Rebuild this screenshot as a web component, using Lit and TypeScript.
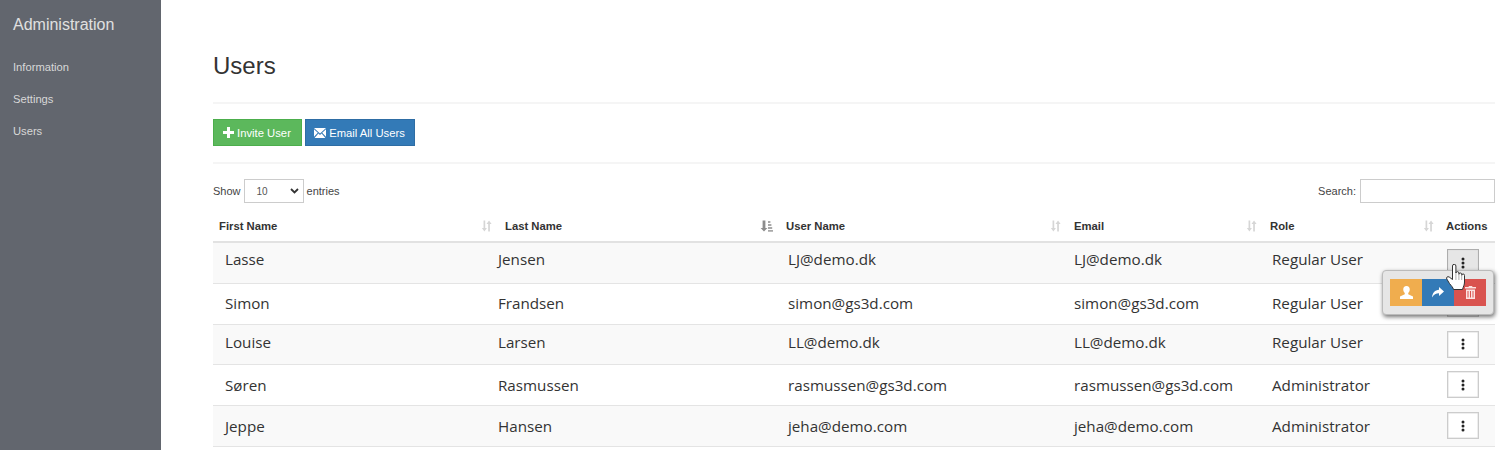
import { LitElement, html, css } from "lit";
import { customElement } from "lit/decorators.js";

const users = [
  ["Lasse", "Jensen", "LJ@demo.dk", "LJ@demo.dk", "Regular User"],
  ["Simon", "Frandsen", "simon@gs3d.com", "simon@gs3d.com", "Regular User"],
  ["Louise", "Larsen", "LL@demo.dk", "LL@demo.dk", "Regular User"],
  ["Søren", "Rasmussen", "rasmussen@gs3d.com", "rasmussen@gs3d.com", "Administrator"],
  ["Jeppe", "Hansen", "jeha@demo.com", "jeha@demo.com", "Administrator"],
];

const headers = ["First Name", "Last Name", "User Name", "Email", "Role"];

const sortIcon = html`<svg class="sort" width="11" height="12" viewBox="0 0 13 12" preserveAspectRatio="none">
  <path d="M3 0.5h2v7.5h2l-3 3.5-3-3.5h2z M8.5 11.5v-7.5h-2l3-3.5 3 3.5h-2v7.5z" fill="#d6d6d6"/>
</svg>`;
const sortedIcon = html`<svg class="sort" width="13" height="12" viewBox="0 0 13 12">
  <path d="M2.6 0.5h2.8v7.5h2l-3.4 3.5-3.4-3.5h2z" fill="#8d8d8d"/>
  <path d="M8 1h2.4v2H8z M8 4h3.4v2H8z M8 7h4.2v2H8z M8 10h5v1.8H8z" fill="#a8a8a8"/>
</svg>`;

const dots = html`<svg width="4" height="12" viewBox="0 0 4 12">
  <circle cx="2" cy="2" r="1.5" fill="#222"/><circle cx="2" cy="6" r="1.5" fill="#222"/><circle cx="2" cy="10" r="1.5" fill="#222"/>
</svg>`;

@customElement("app-root")
export class AppRoot extends LitElement {
  static styles = css`
    :host { display: flex; width: 1502px; height: 456px; overflow: hidden; background: #fff;
      font-family: "Liberation Sans", Arial, sans-serif; color: #333; }
    .side { width: 161px; height: 450px; flex: none; background: #62666e; padding: 16px 0 0 13px; box-sizing: border-box; }
    .brand { font-size: 16px; line-height: 18px; height: 35px; color: #e0e0e0; }
    .side nav { display: flex; flex-direction: column; }
    .side a { font-size: 11.2px; height: 32px; line-height: 32px; color: #d8d8d8; }
    .main { flex: 1; padding: 0 7px 0 52px; min-width: 0; }
    h1 { margin: 0; padding-top: 52px; height: 50px; font-size: 24px; font-weight: 400; line-height: 27px; color: #333; border-bottom: 2px solid #f5f5f5; box-sizing: content-box; }
    .toolbar { display: flex; gap: 3px; padding: 15px 0 16px; border-bottom: 2px solid #f5f5f5; }
    .btn { display: flex; align-items: center; justify-content: center; gap: 3px; height: 27px; font-size: 11.25px; color: #fff; box-sizing: border-box; border: 1px solid; }
    .green { width: 89px; background: #5cb85c; border-color: #4cae4c; padding-right: 1px; }
    .blue { width: 110px; background: #337ab7; border-color: #2e6da4; padding-right: 1px; }
    .controls { display: flex; justify-content: space-between; align-items: center; height: 24px; margin-top: 15px; font-size: 11px; color: #444; }
    .left, .right { display: flex; align-items: center; gap: 3px; }
    .select { width: 60px; height: 24px; box-sizing: border-box; border: 1px solid #ccc; display: flex; align-items: center; justify-content: space-between; padding: 0 4px 0 12px; font-size: 10px; background: #fff; color: #555; }
    .search { width: 135px; height: 24px; box-sizing: border-box; border: 1px solid #ccc; margin-left: 1px; }
    table { margin-top: 6px; width: 1282px; border-collapse: collapse; table-layout: fixed; }
    th { height: 33px; padding: 2px 6px 0 7px; font-size: 11.3px; font-weight: 700; text-align: left; border-bottom: 2px solid #e2e2e2; color: #333; box-sizing: border-box; }
    th:first-child, th:last-child { padding-left: 6px; }
    th span.h { display: flex; justify-content: space-between; align-items: center; }
    td { height: 41px; padding: 0; font-family: "Open Sans", sans-serif; font-size: 15.2px; color: #333; border-bottom: 1px solid #e4e4e4; box-sizing: border-box; }
    tbody tr:nth-child(odd) { background: #f9f9f9; }
    tbody tr:nth-child(3) td { height: 40px; }
    tbody tr:nth-child(1) td { padding-bottom: 8px; }
    tbody tr:nth-child(2) td { padding-bottom: 2px; }
    tbody tr:nth-child(3) td { padding-bottom: 4px; }
    td:nth-child(1) { padding-left: 12px; }
    td:nth-child(3) { padding-left: 9px; }
    td:nth-child(4) { padding-left: 7px; }
    td:nth-child(5) { padding-left: 9px; }
    tbody tr td:nth-child(6) { padding: 0 0 0 7px; }
    .more { width: 32px; height: 27px; box-sizing: border-box; background: #fff; border: 1px solid #ccc; box-shadow: inset 0 0 0 0.5px #ddd; display: flex; align-items: center; justify-content: center; }
    .more.active { background: #e6e6e6; border-color: #adadad; }
    .pop { position: absolute; left: 1382px; top: 270px; width: 112px; height: 45px; box-sizing: border-box; background: #e6e6e6; border: 1px solid #bbb; border-radius: 4px; box-shadow: 1px 2px 4px rgba(0,0,0,.55); display: flex; padding: 8px 7px; }
    .pop div { width: 32px; height: 27px; display: flex; align-items: center; justify-content: center; }
    .o { background: #f0ad4e; } .b { background: #337ab7; } .r { background: #d9534f; }
    .hand { position: absolute; left: 1446px; top: 264px; }
  `;

  render() {
    return html`
      <div class="side">
        <div class="brand">Administration</div>
        <nav><a>Information</a><a>Settings</a><a>Users</a></nav>
      </div>
      <div class="main">
        <h1>Users</h1>
        <div class="toolbar">
          <div class="btn green">
            <svg width="11" height="11" viewBox="0 0 11 11"><path d="M4 0h3v4h4v3H7v4H4V7H0V4h4z" fill="#fff"/></svg>
            Invite User
          </div>
          <div class="btn blue">
            <svg width="12" height="10" viewBox="0 0 12 10"><path d="M0 0h12L6 5.5z M0 1.2v7.6l3.8-4.1z M12 1.2v7.6L8.2 4.7z M0.6 10h10.8L7.6 5.6 6 7 4.4 5.6z" fill="#fff"/></svg>
            Email All Users
          </div>
        </div>
        <div class="controls">
          <div class="left">Show
            <div class="select"><span>10</span>
              <svg width="9" height="6" viewBox="0 0 9 6"><path d="M1 1l3.5 3.5L8 1" fill="none" stroke="#333" stroke-width="1.8"/></svg>
            </div>
            entries</div>
          <div class="right">Search: <div class="search"></div></div>
        </div>
        <table>
          <colgroup>
            <col style="width:285px"/><col style="width:281px"/><col style="width:288px"/><col style="width:196px"/><col style="width:177px"/><col style="width:55px"/>
          </colgroup>
          <thead><tr>
            ${headers.map((h, i) => html`<th><span class="h">${h}${i === 1 ? sortedIcon : sortIcon}</span></th>`)}
            <th>Actions</th>
          </tr></thead>
          <tbody>
            ${users.map((u, i) => html`<tr>
              ${u.map((c) => html`<td>${c}</td>`)}
              <td><div class="more ${i === 0 ? "active" : ""}">${dots}</div></td>
            </tr>`)}
          </tbody>
        </table>
      </div>
      <div class="pop">
        <div class="o"><svg width="13" height="13" viewBox="0 0 12 12"><path d="M6 0c2 0 3 1.4 3 3.2 0 1.4-.6 2.6-1.4 3.2v1.1L12 9.6V12H0V9.6l4.4-2.1V6.4C3.6 5.8 3 4.6 3 3.2 3 1.4 4 0 6 0z" fill="#fff"/></svg></div>
        <div class="b"><svg width="12" height="11" viewBox="0 0 12 11"><path d="M7 0l5 4.5L7 9V6.2C4 6.2 1.8 7.2 0 10.5 .3 6 3 3 7 2.8z" fill="#fff"/></svg></div>
        <div class="r"><svg width="11" height="13" viewBox="0 0 11 13"><path d="M4 0h3l.6 1H11v1.5H0V1h3.4z M1 3.5h9V13H1z" fill="#fbe3e2"/><path d="M3 5v6.5M5.5 5v6.5M8 5v6.5" stroke="#d9534f" stroke-width="1"/></svg></div>
      </div>
      <svg class="hand" width="21" height="26" viewBox="0 0 21 26">
        <path d="M6.5 2a1.7 1.7 0 0 1 3.4 0V9a1.5 1.5 0 0 1 3 .3v1a1.4 1.4 0 0 1 2.8.2v.8a1.4 1.4 0 0 1 2.8.2V18c0 3-1.2 4.5-2 7.5H7.5c-.5-2-2-3.5-4-6L.8 15c-1-1.5.8-3 2.4-2l3.3 2.5z" fill="#fff" stroke="#333" stroke-width="1" stroke-linejoin="round"/>
        <path d="M9.9 9v7M12.9 10v6M15.7 11v5" stroke="#999" stroke-width=".8" fill="none"/>
      </svg>
    `;
  }
}
